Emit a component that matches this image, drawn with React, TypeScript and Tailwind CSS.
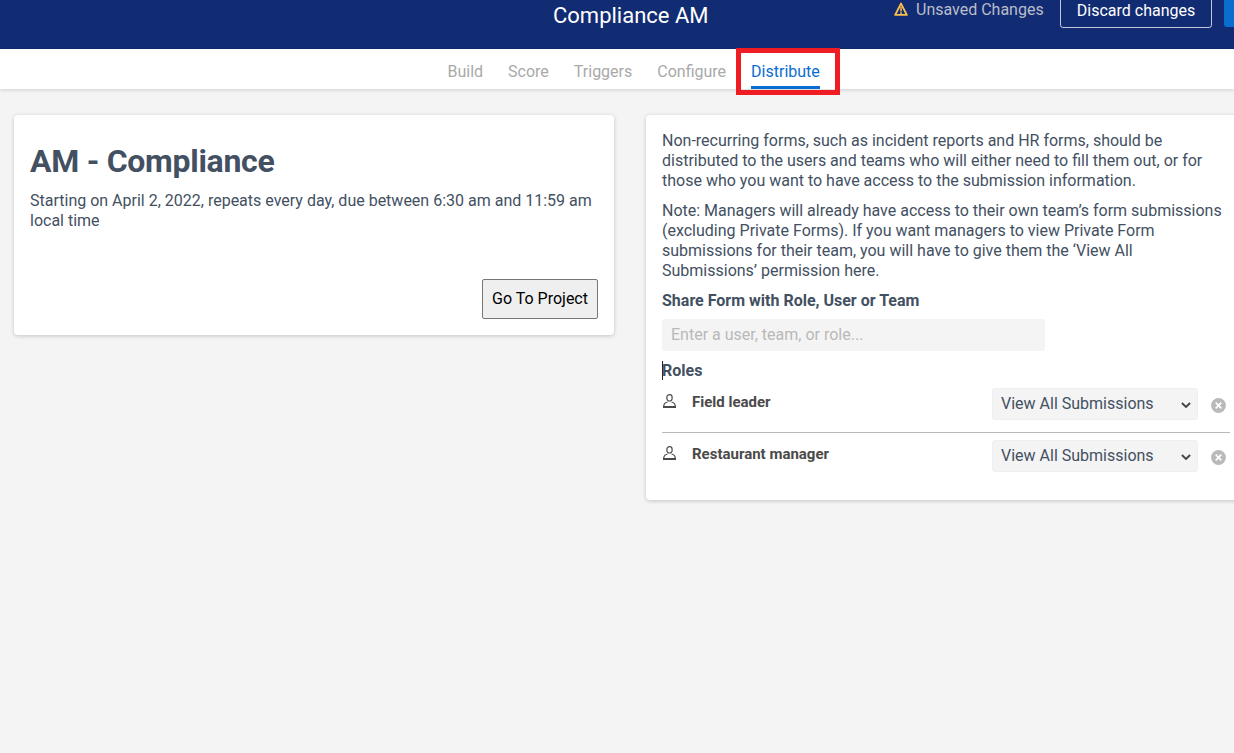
import { useState } from 'react';

const tabs = ['Build', 'Score', 'Triggers', 'Configure', 'Distribute'];

const accessLevels = ['View All Submissions', 'Submit Forms', 'Manage Form'];

function WarningIcon() {
  return (
    <svg width="14" height="14" viewBox="0 0 14 14" fill="none" stroke="#f8bf4c" className="mt-[2px] shrink-0">
      <path d="M7 1.6 12.8 12.9H1.2L7 1.6Z" strokeWidth="1.9" strokeLinejoin="round" />
      <path d="M7 5v4.6M7 10.3v1.6" strokeWidth="1.5" />
    </svg>
  );
}

function UserIcon() {
  return (
    <svg width="14" height="15" viewBox="0 0 14 15" fill="none" stroke="#4a4a4a" className="mt-[6px] ml-[1px] shrink-0">
      <rect x="3.9" y="0.6" width="5.2" height="6.4" rx="2.5" strokeWidth="1.2" />
      <path d="M4.5 8C2.2 8.5.7 9.8.7 12.6h11.6c0-2.8-1.5-4.1-3.8-4.6" strokeWidth="1.2" />
      <path d="M0 13h13" strokeWidth="2" />
    </svg>
  );
}

function RemoveIcon() {
  return (
    <svg width="15" height="15" viewBox="0 0 15 15">
      <circle cx="7.5" cy="7.5" r="7.4" fill="#b9b9b9" />
      <path d="m4.7 4.7 5.6 5.6M10.3 4.7l-5.6 5.6" stroke="#fff" strokeWidth="1.7" />
    </svg>
  );
}

function RoleRow({ name }: { name: string }) {
  const [access, setAccess] = useState(accessLevels[0]);

  return (
    <div className="flex h-11 items-start">
      <UserIcon />
      <span className="ml-[15px] flex-1 pt-1 text-[15px] leading-5 font-bold text-[#4a4a4a]">{name}</span>
      <div className="relative h-8 w-[206px]">
        <select
          value={access}
          onChange={(e) => setAccess(e.target.value)}
          className="h-8 w-full appearance-none rounded-[3px] border border-[#edeff2] bg-[#f4f4f4] px-2 outline-none"
        >
          {accessLevels.map((level) => (
            <option key={level}>{level}</option>
          ))}
        </select>
        <svg width="10" height="7" viewBox="0 0 10 7" className="pointer-events-none absolute top-[14px] right-[7px]">
          <path d="m.9 1 4.1 4 4.1-4" fill="none" stroke="#444" strokeWidth="1.9" />
        </svg>
      </div>
      <button className="mt-[10px] mr-1 ml-[13px]" aria-label="Remove">
        <RemoveIcon />
      </button>
    </div>
  );
}

export default function App() {
  const [activeTab, setActiveTab] = useState('Distribute');
  const [query, setQuery] = useState('');

  return (
    <div className="h-[753px] w-[1234px] overflow-hidden bg-[#f4f4f4] font-[Roboto,sans-serif] text-base leading-5 text-[#435062]">
      {/* Top bar */}
      <header className="flex h-[49px] items-start bg-[#122c74] text-white">
        <h1 className="ml-[553px] w-[341px] shrink-0 pt-px text-[22px] leading-[30px]">Compliance AM</h1>
        <WarningIcon />
        <span className="ml-2 w-[144px] shrink-0 text-[#b9bdc9]">Unsaved Changes</span>
        <button className="-mt-1 h-8 w-[152px] shrink-0 rounded-[3px] border border-[#c3c8d6] pb-[2px]">
          Discard changes
        </button>
        <button className="-mt-1 ml-3 h-[31px] w-20 shrink-0 rounded-[3px] bg-[#0a6ed1]" aria-label="Save" />
      </header>

      {/* Tabs */}
      <nav className="relative flex h-10 gap-[25px] bg-white pl-[447.5px] shadow-[0_1px_4px_rgba(0,0,0,0.15)]">
        {tabs.map((tab) => (
          <button
            key={tab}
            onClick={() => setActiveTab(tab)}
            className={`h-10 border-b-[3px] pt-[9px] ${
              activeTab === tab ? 'border-[#0a6ed1] text-[#0a6ed1]' : 'border-transparent text-[#a9a9a9]'
            }`}
          >
            {tab}
          </button>
        ))}
        <div className="pointer-events-none absolute -top-px left-[736px] h-[47px] w-[104px] border-5 border-[#ef1c24]" />
      </nav>

      <main className="flex items-start gap-8 pt-[26px] pl-[14px]">
        <section className="flex h-[220px] w-[600px] shrink-0 flex-col rounded bg-white p-4 shadow-[0_1px_4px_rgba(0,0,0,0.2)]">
          <h2 className="mt-2 text-[32px] leading-[44px] font-bold tracking-[-0.28px]">AM - Compliance</h2>
          <p className="mt-2">
            Starting on April 2, 2022, repeats every day, due between 6:30 am and 11:59 am
            <br />
            local time
          </p>
          <button className="mt-auto h-10 w-[116px] self-end rounded-[2px] border border-[#767676] bg-[#efefef] text-black">
            Go To Project
          </button>
        </section>

        <section className="h-[385px] w-[600px] shrink-0 rounded bg-white p-4 shadow-[0_1px_4px_rgba(0,0,0,0.2)]">
          <p>
            Non-recurring forms, such as incident reports and HR forms, should be
            <br />
            distributed to the users and teams who will either need to fill them out, or for
            <br />
            those who you want to have access to the submission information.
          </p>
          <p className="mt-2.5">
            Note: Managers will already have access to their own team’s form submissions
            <br />
            (excluding Private Forms). If you want managers to view Private Form
            <br />
            submissions for their team, you will have to give them the ‘View All
            <br />
            Submissions’ permission here.
          </p>
          <h3 className="mt-2.5 font-bold">Share Form with Role, User or Team</h3>
          <input
            value={query}
            onChange={(e) => setQuery(e.target.value)}
            placeholder="Enter a user, team, or role..."
            className="mt-2 block h-8 w-[383px] rounded-[3px] bg-[#f4f4f4] px-[9px] pb-[2px] outline-none placeholder:text-[#b9b9b9]"
          />
          <h3 className="relative mt-2.5 font-bold">
            <span className="absolute top-0 left-0 h-[19px] w-px bg-[#1f2937]" />
            Roles
          </h3>
          <div className="mt-[7px]">
            <RoleRow name="Field leader" />
            <div className="border-t border-[#b9b9b9] pt-[7px]">
              <RoleRow name="Restaurant manager" />
            </div>
          </div>
        </section>
      </main>
    </div>
  );
}
